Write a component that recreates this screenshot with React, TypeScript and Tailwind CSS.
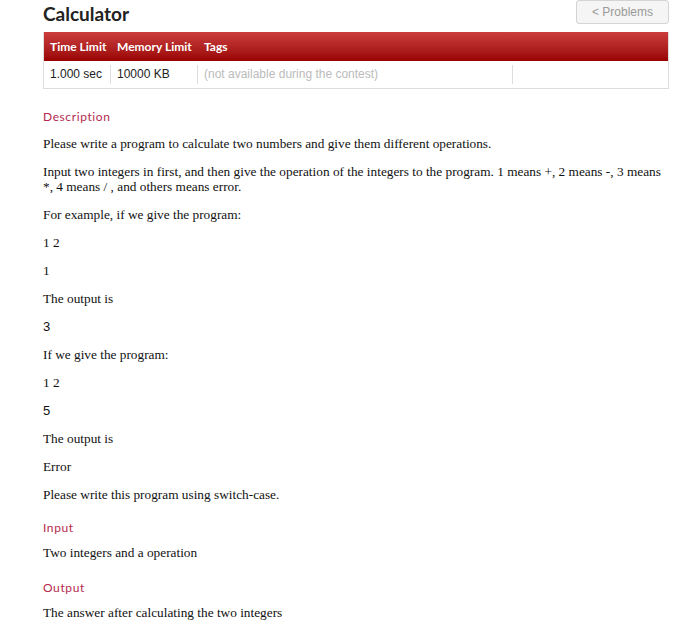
const serif = "font-['Georgia','Liberation_Serif',serif]";

const Heading = ({ children, className = "" }: { children: string; className?: string }) => (
  <h3
    className={`font-['Lato','Open_Sans',sans-serif] text-[12px] leading-[14px] tracking-[0.6px] text-[#b5294e] ${className}`}
  >
    {children}
  </h3>
);

const P = ({ children, className = "" }: { children: React.ReactNode; className?: string }) => (
  <p className={`${serif} text-[13.3px] leading-[15px] text-[#111] mb-[13px] ${className}`}>{children}</p>
);

const App = () => {
  return (
    <div className="w-[700px] h-[634px] bg-white overflow-hidden">
      <div className="ml-[43px] w-[626px]">
        <div className="flex items-start justify-between h-[32px]">
          <h1 className="font-['Lato','Open_Sans',sans-serif] font-bold text-[19px] leading-[22px] text-[#222] mt-[3px]">
            Calculator
          </h1>
          <button className="h-[24px] w-[93px] border border-[#d4d4d4] rounded-[3px] bg-[#f5f5f5] text-[#999] font-['Liberation_Sans',Arial,sans-serif] text-[12px]">
            &lt; Problems
          </button>
        </div>

        {/* limits table */}
        <div className="border border-[#ddd] border-t-0">
          <div className="flex h-[29px] items-center bg-gradient-to-b from-[#cc3c3e] to-[#990000] text-white font-['Lato','Open_Sans',sans-serif] font-bold text-[12px]">
            <div className="w-[67px] pl-[6px]">Time Limit</div>
            <div className="w-[87px] pl-[6px]">Memory Limit</div>
            <div className="pl-[6px]">Tags</div>
          </div>
          <div className="flex h-[27px] items-center font-['Liberation_Sans',Arial,sans-serif] text-[12px] text-[#222]">
            <div className="w-[67px] pl-[6px] h-[19px] leading-[19px] border-r border-[#ddd]">1.000 sec</div>
            <div className="w-[87px] pl-[6px] h-[19px] leading-[19px] border-r border-[#ddd]">10000 KB</div>
            <div className="w-[315px] pl-[6px] h-[19px] leading-[19px] border-r border-[#ddd] text-[#bbb]">
              (not available during the contest)
            </div>
          </div>
        </div>

        <div className="pt-[21px]">
          <Heading className="mb-[12px]">Description</Heading>
          <P>Please write a program to calculate two numbers and give them different operations.</P>
          <P>
            Input two integers in first, and then give the operation of the integers to the program. 1 means +, 2
            means -, 3 means *, 4 means / , and others means error.
          </P>
          <P>For example, if we give the program:</P>
          <P className="text-[11px]">1 2</P>
          <P className="text-[11px]">1</P>
          <P>The output is</P>
          <P className="font-['Liberation_Sans',Arial,sans-serif] text-[13px]">3</P>
          <P>If we give the program:</P>
          <P className="text-[11px]">1 2</P>
          <P className="font-['Liberation_Sans',Arial,sans-serif] text-[13px]">5</P>
          <P>The output is</P>
          <P>Error</P>
          <P>Please write this program using switch-case.</P>

          <Heading className="mt-[19px] mb-[10px]">Input</Heading>
          <P>Two integers and a operation</P>

          <Heading className="mt-[21px] mb-[10px]">Output</Heading>
          <P>The answer after calculating the two integers</P>
        </div>
      </div>
    </div>
  );
};

export default App;
